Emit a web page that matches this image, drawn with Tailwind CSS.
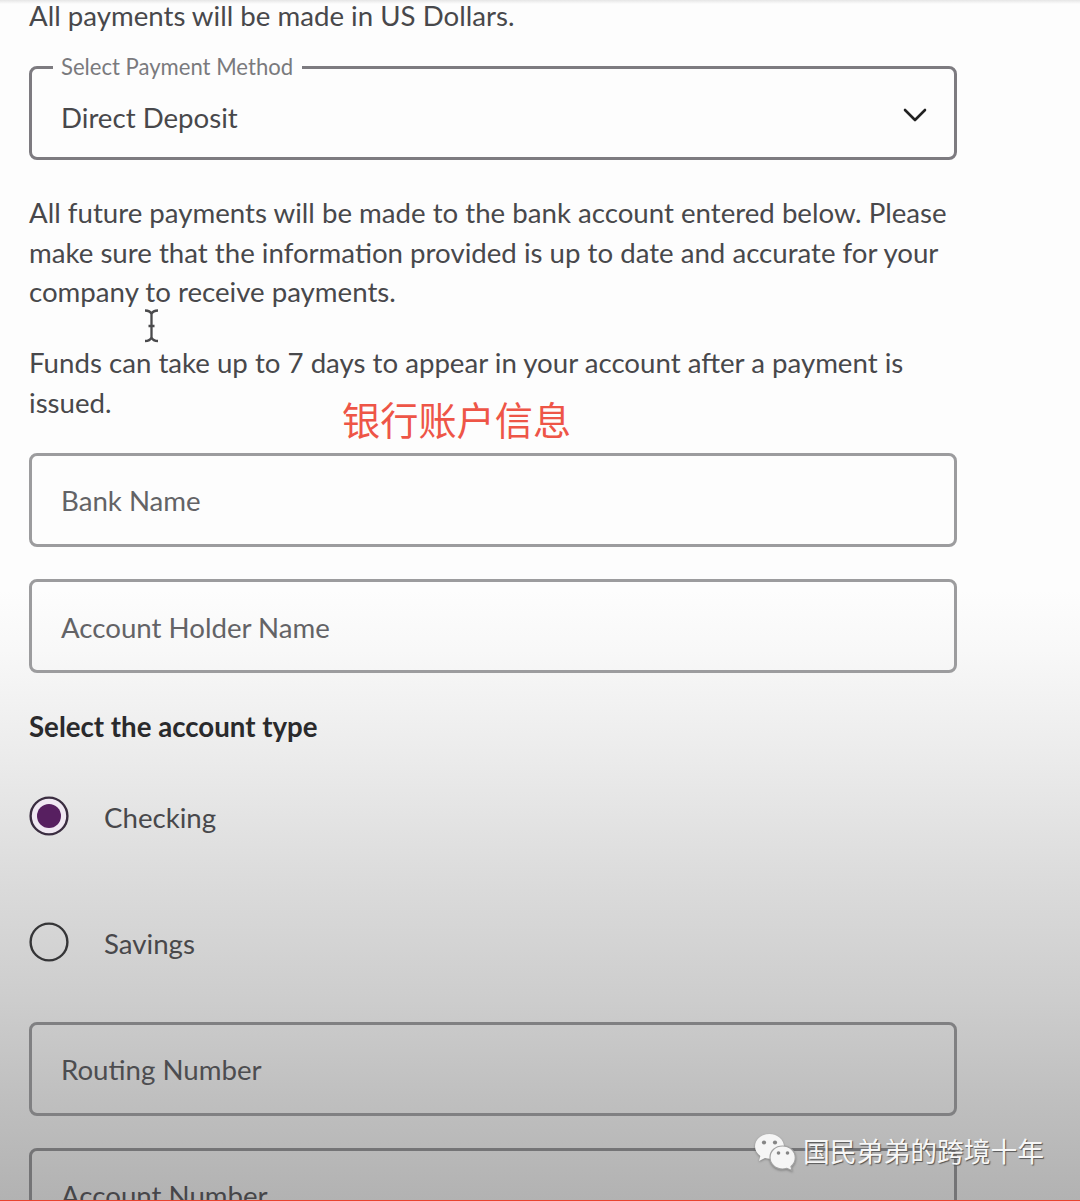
<!DOCTYPE html>
<html lang="en">
<head>
    <meta charset="UTF-8">
    <title>Payment Method</title>
    <script src="https://cdn.jsdelivr.net/npm/@tailwindcss/browser@4"></script>
</head>
<body class="bg-[#fdfdfd]">
<div class="relative w-[1080px] h-[1201px] overflow-hidden font-['Lato','Noto_Sans_CJK_SC',sans-serif] text-[27.65px] leading-[39.6px] text-[#48484b] bg-[linear-gradient(to_bottom,#e6e6e6_0px,#fdfdfd_4px,#fdfdfd_590px,#f8f8f8_650px,#ebebeb_760px,#dadada_890px,#cdcdcd_1000px,#bfbfbf_1100px,#b2b2b2_1201px)]">

    <main class="flex flex-col w-[928px] ml-[29px] -mt-1">
        <p class="whitespace-nowrap">All payments will be made in US Dollars.</p>

        <!-- Payment method -->
        <div class="relative mt-[30.4px] h-[94px] shrink-0 border-3 border-[#7d7b80] rounded-[8px] flex items-center justify-between pl-[29px] pr-[27px] pt-2.5">
            <span class="absolute left-[21px] -top-[17px] bg-[#fdfdfd] px-2 pr-[9px] text-[22.1px] leading-[30px] text-[#7a7a7d] whitespace-nowrap">Select Payment Method</span>
            <span>Direct Deposit</span>
            <svg class="w-6 h-4 -mt-[6px]" viewBox="0 0 24 16" fill="none" stroke="#222" stroke-width="2.6" stroke-linecap="round" stroke-linejoin="round"><path d="M2 3l10 10L22 3"/></svg>
        </div>

        <p class="mt-[33px] whitespace-nowrap">All future payments will be made to the bank account entered below. Please<br>make sure that the information provided is up to date and accurate for your<br>company to receive payments.</p>
        <p class="mt-[31.4px] whitespace-nowrap">Funds can take up to 7 days to appear in your account after a payment is<br>issued.</p>

        <!-- Bank details -->
        <div class="mt-[30.6px] h-[94px] shrink-0 border-3 border-[#9c9c9e] rounded-[8px] flex items-center pl-[29px] pt-0.5 text-[#636366]">Bank Name</div>
        <div class="mt-8 h-[94px] shrink-0 border-3 border-[#9c9c9e] rounded-[8px] flex items-center pl-[29px] pt-[3px] text-[#636366]">Account Holder Name</div>

        <!-- Account type -->
        <p class="mt-[34px] font-bold text-[#2a2a2c]">Select the account type</p>
        <div class="mt-[49.4px] h-10 flex items-center gap-[35px]">
            <svg class="w-10 h-10" viewBox="0 0 40 40"><circle cx="20" cy="20" r="18.4" fill="#f0e8f2" stroke="#3a2d40" stroke-width="2.4"/><circle cx="20" cy="20" r="12" fill="#571f60"/></svg>
            <span class="pt-[3px]">Checking</span>
        </div>
        <div class="mt-[86px] h-10 flex items-center gap-[35px]">
            <svg class="w-10 h-10" viewBox="0 0 40 40" fill="none"><circle cx="20" cy="20" r="18.4" stroke="#353537" stroke-width="2.4"/></svg>
            <span class="pt-[3px]">Savings</span>
        </div>

        <div class="mt-[60px] h-[94px] shrink-0 border-3 border-[#808082] rounded-[8px] flex items-center pl-[29px] pt-0.5 text-[#4d4d50]">Routing Number</div>
        <div class="mt-8 h-[94px] shrink-0 border-3 border-[#747476] rounded-[8px] flex items-center pl-[29px] pt-0.5 text-[#464649]">Account Number</div>
    </main>

    <!-- Red note -->
    <div class="absolute left-[342px] top-[391px] font-['Noto_Sans_CJK_SC',sans-serif] text-[38.2px] leading-[56px] text-[#ee5547] whitespace-nowrap">银行账户信息</div>

    <!-- Text cursor -->
    <svg class="absolute left-[143px] top-[308px] w-4 h-9" viewBox="0 0 16 36" fill="none" stroke="#4a4a4c" stroke-width="2.3"><path d="M2 2.5Q7 2.5 8.500 6Q10 2.500 15 2.500M8.500 5V30M2 33Q7 33 8.500 29.500Q10 33 15 33M5.500 18H11.500"/></svg>

    <!-- Watermark -->
    <div class="absolute left-[754px] top-[1132px] flex items-start whitespace-nowrap">
        <svg class="w-[43px] h-10 drop-shadow-[0_1px_1px_rgba(70,70,70,0.5)]" viewBox="0 0 43 40">
            <path fill="#f5f5f5" d="M15.500 2C7.500 2 1 7.500 1 14.500c0 4 2 7 5.300 9.500L5 29l6-3c1.500.5 3 .7 4.500.7 8 0 14.500-5.500 14.500-12.200S23.500 2 15.500 2z"/>
            <path fill="#f5f5f5" stroke="#a2a2a2" stroke-width="1.200" d="M28.500 14C21.500 14 16 19 16 25.500S21.500 37 28.500 37c1.500 0 3-.2 4.300-.7L38 38.500l-1-4c2.700-2 4.300-5.200 4.300-9C41.300 19 35.500 14 28.500 14z"/>
            <g fill="#858585"><circle cx="10" cy="10.500" r="2.100"/><circle cx="21" cy="10.500" r="2.100"/><circle cx="24.500" cy="21" r="1.800"/><circle cx="33.500" cy="21" r="1.800"/></g>
        </svg>
        <span class="ml-[6px] -mt-px font-['Noto_Sans_CJK_SC',sans-serif] text-[26.8px] leading-10 text-[#f7f7f7] [text-shadow:1px_1px_1px_#555]">国民弟弟的跨境十年</span>
    </div>

    <div class="absolute left-0 bottom-0 w-full h-px bg-[#e8432f]"></div>
</div>
</body>
</html>
